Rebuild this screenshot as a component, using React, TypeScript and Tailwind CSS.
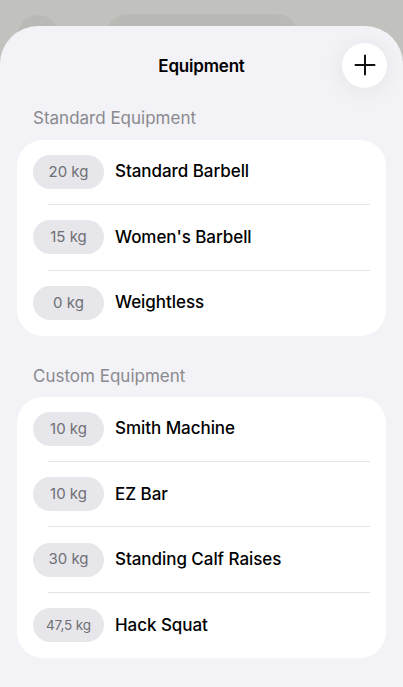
import React from "react";

type Item = { w: string; name: string; small?: boolean };

const standard: Item[] = [
  { w: "20 kg", name: "Standard Barbell" },
  { w: "15 kg", name: "Women's Barbell" },
  { w: "0 kg", name: "Weightless" },
];

const custom: Item[] = [
  { w: "10 kg", name: "Smith Machine" },
  { w: "10 kg", name: "EZ Bar" },
  { w: "30 kg", name: "Standing Calf Raises" },
  { w: "47,5 kg", name: "Hack Squat", small: true },
];

function Card({ items }: { items: Item[] }) {
  return (
    <div className="mx-[17px] rounded-[26px] bg-white overflow-hidden">
      {items.map((it, i) => (
        <div key={i} className="flex h-[65.3px] flex-col">
          <div className="flex flex-1 items-center pl-[16px]">
            <div className="flex h-[34px] w-[71px] items-center justify-center rounded-full bg-[#e6e6eb]">
              <span
                className={
                  it.small
                    ? "text-[13.5px] text-[#6f6f74] tracking-[-0.1px]"
                    : "text-[15px] text-[#6f6f74]"
                }
              >
                {it.w}
              </span>
            </div>
            <span className="ml-[11px] text-[17px] font-medium text-black tracking-[-0.05px]">
              {it.name}
            </span>
          </div>
          {i < items.length - 1 ? (
            <div className="ml-[31px] mr-[16px] h-px bg-[#e4e4e8]" />
          ) : null}
        </div>
      ))}
    </div>
  );
}

export default function App() {
  return (
    <div
      className="relative h-[687px] w-[403px] overflow-hidden bg-[#c1c2bd]"
      style={{ fontFamily: "Inter, 'Noto Sans', sans-serif" }}
    >
      {/* blurred backdrop shapes */}
      <div className="absolute left-[18px] top-[15px] h-[40px] w-[40px] rounded-full bg-[#b9bab5]" />
      <div className="absolute left-[107px] top-[14px] h-[40px] w-[190px] rounded-full bg-[#b9bab5]" />

      <div className="relative mt-[26px] h-[661px] rounded-t-[38px] bg-[#f2f2f7]">
        <div className="grid h-[80px] grid-cols-[1fr_auto_1fr] items-center">
          <div />
          <div className="pt-[1px] text-[17px] font-semibold text-black tracking-[-0.2px]">
            Equipment
          </div>
          <div className="flex justify-end pr-[16px]">
            <div className="mb-[2px] flex h-[45px] w-[45px] items-center justify-center rounded-full bg-white shadow-[0_2px_24px_rgba(0,0,0,0.07)]">
              <svg width="22" height="22" viewBox="0 0 22 22">
                <path
                  d="M11 1.5V20.5M1.5 11H20.5"
                  stroke="#111"
                  strokeWidth="2"
                  strokeLinecap="round"
                />
              </svg>
            </div>
          </div>
        </div>

        <div className="pl-[33px] pt-[1px] pb-[11px] text-[17px] leading-[22px] text-[#8a8a8e]">
          Standard Equipment
        </div>
        <Card items={standard} />

        <div className="pl-[33px] pt-[29px] pb-[10px] text-[17px] leading-[22px] text-[#8a8a8e]">
          Custom Equipment
        </div>
        <Card items={custom} />
      </div>
    </div>
  );
}
